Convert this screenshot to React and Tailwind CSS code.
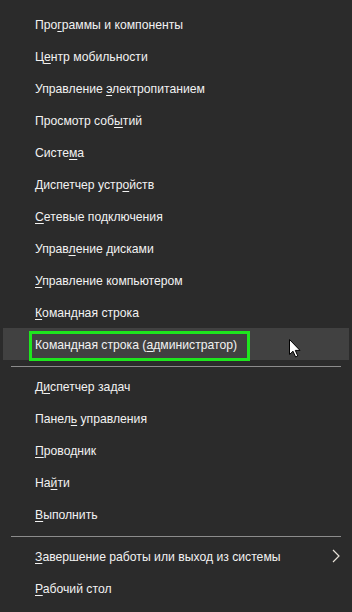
const items = [
  ["Про", "г", "раммы и компоненты"],
  ["Ц", "е", "нтр мобильности"],
  ["Управление ", "э", "лектропитанием"],
  ["Просмотр соб", "ы", "тий"],
  ["Систе", "м", "а"],
  ["Диспетчер устр", "о", "йств"],
  ["", "С", "етевые подключения"],
  ["Управ", "л", "ение дисками"],
  ["", "У", "правление компьютером"],
  ["", "К", "омандная строка"],
  ["Командная строка (", "а", "дминистратор)", "hover"],
  "sep",
  ["Д", "и", "спетчер задач"],
  ["Панел", "ь", " управления"],
  ["", "П", "роводник"],
  ["На", "й", "ти"],
  ["", "В", "ыполнить"],
  "sep",
  ["", "З", "авершение работы или выход из системы", "sub"],
  ["", "Р", "абочий стол"],
];

function Cursor() {
  return (
    <svg className="absolute left-[289px] top-[339px]" width="13" height="19" viewBox="0 0 13 19">
      <path d="M0.5 0.5 L0.5 15.5 L4 12.2 L6.6 18 L8.8 17 L6.3 11.4 L11 11.4 Z" fill="#fff" stroke="#000" strokeWidth="1" strokeLinejoin="round" />
    </svg>
  );
}

function Row({ item }) {
  const [a, u, b, kind] = item;
  return (
    <div className={`relative h-8 mx-[3px] flex items-center ${kind === "hover" ? "bg-[#414141]" : ""}`}>
      {kind === "hover" && (
        <div className="absolute left-[26px] top-[3px] w-[221px] h-[30px] border-[3px] border-[#1ee61e]" />
      )}
      <span className="pl-[32px] pt-[3px] text-[12.2px] text-[#f2f2f2]">
        {a}
        <span className="underline underline-offset-2">{u}</span>
        {b}
      </span>
      {kind === "sub" && (
        <svg className="absolute right-[9px] top-[9px]" width="8" height="14" viewBox="0 0 8 14">
          <path d="M1 1 L7 7 L1 13" fill="none" stroke="#e8e2d8" strokeWidth="1.2" />
        </svg>
      )}
    </div>
  );
}

export default function App() {
  return (
    <div className="relative w-[352px] h-[612px] bg-[#2b2b2b] pt-2 overflow-hidden" style={{ fontFamily: '"Liberation Sans", Arial, sans-serif' }}>
      {items.map((item, i) =>
        item === "sep" ? (
          <div key={i} className="h-[10px] flex items-center px-[11px]">
            <div className="h-px w-full bg-[#8c8c8c] mt-[2px]" />
          </div>
        ) : (
          <Row key={i} item={item} />
        )
      )}
      <Cursor />
    </div>
  );
}
